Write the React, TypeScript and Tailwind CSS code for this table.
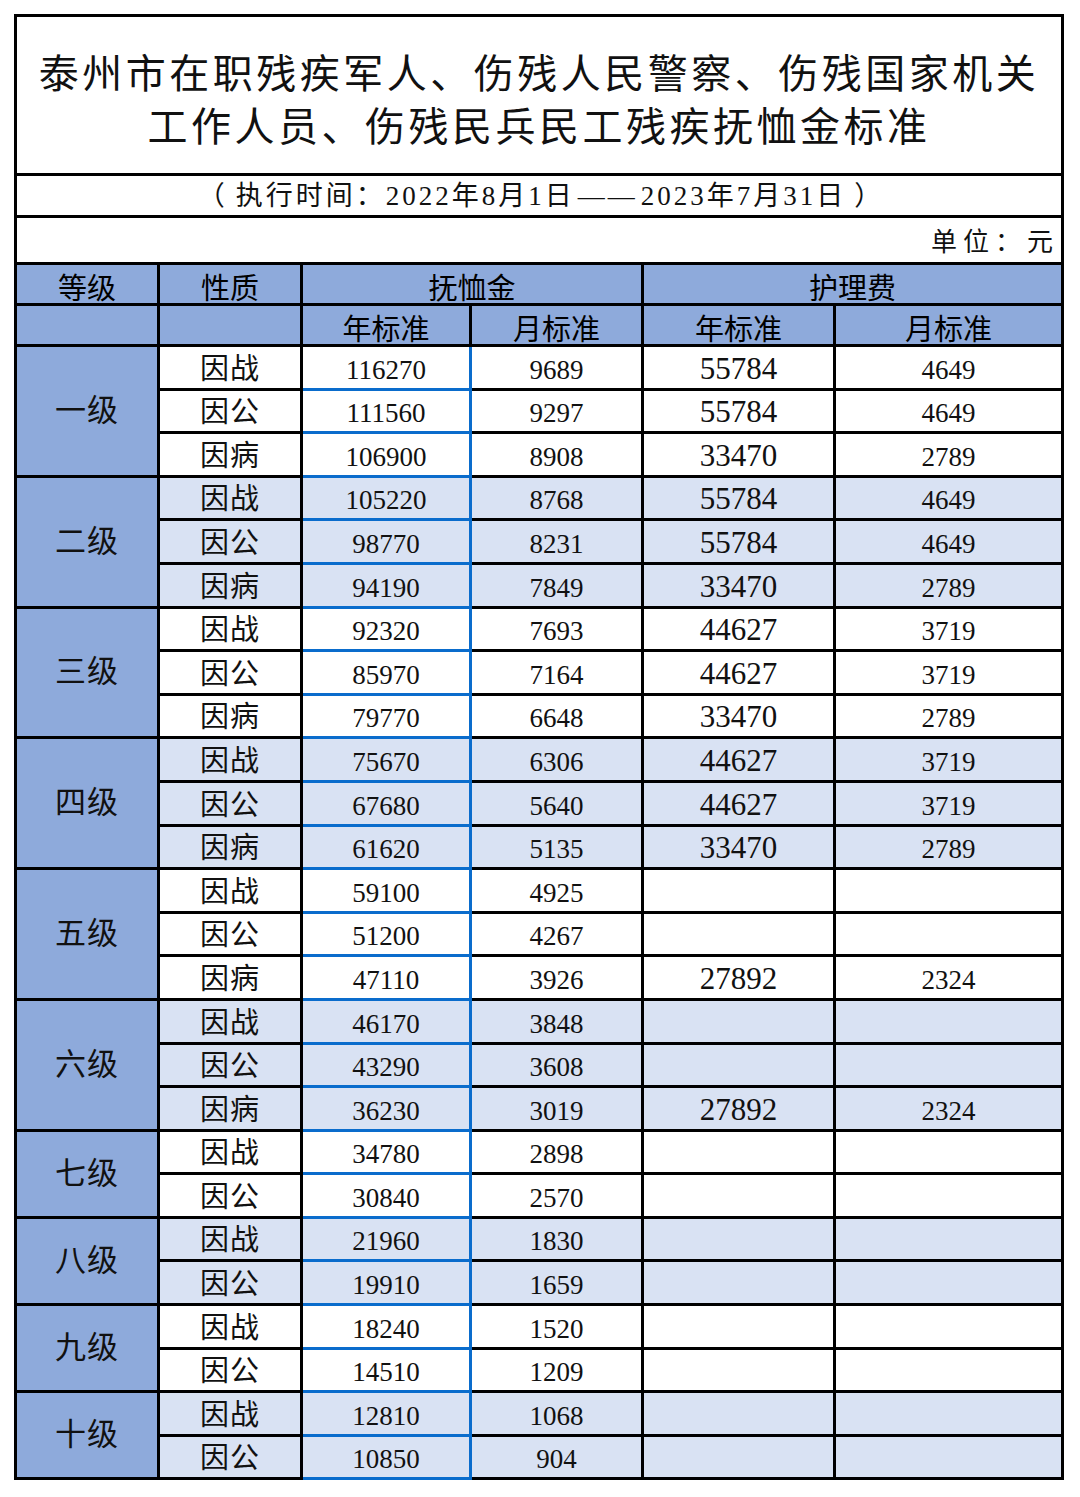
import React from 'react';

type Row = { kind: string; y: string; m: string; hy?: string; hm?: string };
type Group = { level: string; rows: Row[] };

const groups: Group[] = [
  {
    level: '一级',
    rows: [
      { kind: '因战', y: '116270', m: '9689', hy: '55784', hm: '4649' },
      { kind: '因公', y: '111560', m: '9297', hy: '55784', hm: '4649' },
      { kind: '因病', y: '106900', m: '8908', hy: '33470', hm: '2789' },
    ],
  },
  {
    level: '二级',
    rows: [
      { kind: '因战', y: '105220', m: '8768', hy: '55784', hm: '4649' },
      { kind: '因公', y: '98770', m: '8231', hy: '55784', hm: '4649' },
      { kind: '因病', y: '94190', m: '7849', hy: '33470', hm: '2789' },
    ],
  },
  {
    level: '三级',
    rows: [
      { kind: '因战', y: '92320', m: '7693', hy: '44627', hm: '3719' },
      { kind: '因公', y: '85970', m: '7164', hy: '44627', hm: '3719' },
      { kind: '因病', y: '79770', m: '6648', hy: '33470', hm: '2789' },
    ],
  },
  {
    level: '四级',
    rows: [
      { kind: '因战', y: '75670', m: '6306', hy: '44627', hm: '3719' },
      { kind: '因公', y: '67680', m: '5640', hy: '44627', hm: '3719' },
      { kind: '因病', y: '61620', m: '5135', hy: '33470', hm: '2789' },
    ],
  },
  {
    level: '五级',
    rows: [
      { kind: '因战', y: '59100', m: '4925' },
      { kind: '因公', y: '51200', m: '4267' },
      { kind: '因病', y: '47110', m: '3926', hy: '27892', hm: '2324' },
    ],
  },
  {
    level: '六级',
    rows: [
      { kind: '因战', y: '46170', m: '3848' },
      { kind: '因公', y: '43290', m: '3608' },
      { kind: '因病', y: '36230', m: '3019', hy: '27892', hm: '2324' },
    ],
  },
  {
    level: '七级',
    rows: [
      { kind: '因战', y: '34780', m: '2898' },
      { kind: '因公', y: '30840', m: '2570' },
    ],
  },
  {
    level: '八级',
    rows: [
      { kind: '因战', y: '21960', m: '1830' },
      { kind: '因公', y: '19910', m: '1659' },
    ],
  },
  {
    level: '九级',
    rows: [
      { kind: '因战', y: '18240', m: '1520' },
      { kind: '因公', y: '14510', m: '1209' },
    ],
  },
  {
    level: '十级',
    rows: [
      { kind: '因战', y: '12810', m: '1068' },
      { kind: '因公', y: '10850', m: '904' },
    ],
  },
];

const cell = 'border-[3px] border-black p-0 text-center';
const head = `${cell} bg-[#8eaadb] align-bottom text-[29px] leading-[34px] font-['Noto_Sans_CJK_SC',sans-serif]`;
const data = `${cell} align-bottom pb-[1px] text-[#111]`;

function App() {
  return (
    <div className="bg-white w-[1080px] h-[1497px] pt-[14px] pl-[14px] font-['Liberation_Serif','Noto_Sans_CJK_SC',serif]">
      <table className="table-fixed border-collapse w-[1047px]">
        <colgroup>
          <col className="w-[143px]" />
          <col className="w-[143px]" />
          <col className="w-[169px]" />
          <col className="w-[172px]" />
          <col className="w-[192px]" />
          <col className="w-[228px]" />
        </colgroup>
        <tbody>
          <tr className="h-[159px]">
            <td
              colSpan={6}
              className={`${cell} pt-[6px] text-[40px] leading-[53px] tracking-[3.5px] font-normal text-[#111] font-['Noto_Sans_CJK_SC',sans-serif]`}
            >
              泰州市在职残疾军人、伤残人民警察、伤残国家机关
              <br />
              工作人员、伤残民兵民工残疾抚恤金标准
            </td>
          </tr>
          <tr className="h-[42px]">
            <td colSpan={6} className={`${cell} text-[27px] leading-[32px] tracking-[3px] text-[#111]`}>
              <span className="pl-[4px]">
                <span className="mr-[8px]">（</span>
                执行时间：2022年8月1日
                <span className="mx-[3px]">——</span>
                2023年7月31日
                <span className="ml-[8px]">）</span>
              </span>
            </td>
          </tr>
          <tr className="h-[47px]">
            <td colSpan={6} className={`${cell} text-right align-bottom pr-[2px] pb-[3px] text-[26px] leading-[32px] tracking-[6px] text-[#111]`}>
              单位：元
            </td>
          </tr>
          <tr className="h-[41px]">
            <td className={head}>等级</td>
            <td className={head}>性质</td>
            <td colSpan={2} className={head}>抚恤金</td>
            <td colSpan={2} className={head}>护理费</td>
          </tr>
          <tr className="h-[41px]">
            <td className={head}></td>
            <td className={head}></td>
            <td className={head}>年标准</td>
            <td className={head}>月标准</td>
            <td className={head}>年标准</td>
            <td className={head}>月标准</td>
          </tr>
          {groups.map((g, gi) => {
            const bg = gi % 2 === 0 ? 'bg-white' : 'bg-[#d9e2f3]';
            return g.rows.map((r, ri) => (
              <tr key={`${gi}-${ri}`} className="h-[43.6px]">
                {ri === 0 && (
                  <td
                    rowSpan={g.rows.length}
                    className={`${cell} bg-[#8eaadb] align-middle text-[31px] leading-[36px] tracking-[1px] text-[#111]`}
                  >
                    {g.level}
                  </td>
                )}
                <td className={`${data} ${bg} text-[29px] leading-[36px] tracking-[1px]`}>{r.kind}</td>
                <td className={`${data} ${bg} border-r-[#0a6ccc] border-b-[#0a6ccc] text-[27px] leading-[34px]`}>
                  {r.y}
                </td>
                <td className={`${data} ${bg} text-[27px] leading-[34px]`}>{r.m}</td>
                <td className={`${data} ${bg} text-[31px] leading-[36px]`}>{r.hy ?? ''}</td>
                <td className={`${data} ${bg} text-[27px] leading-[34px]`}>{r.hm ?? ''}</td>
              </tr>
            ));
          })}
        </tbody>
      </table>
    </div>
  );
}

export default App;
